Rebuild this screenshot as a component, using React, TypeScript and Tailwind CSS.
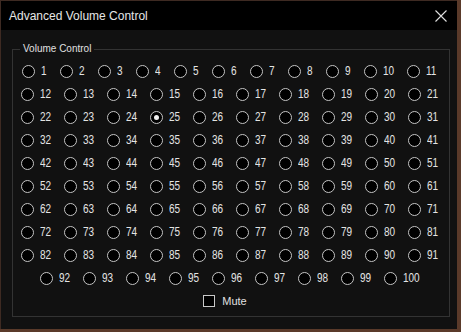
import React from 'react';

const rows: number[][] = [
  Array.from({ length: 11 }, (_, i) => i + 1),
  ...Array.from({ length: 8 }, (_, r) => Array.from({ length: 10 }, (_, i) => 12 + r * 10 + i)),
  Array.from({ length: 9 }, (_, i) => 92 + i),
];

const labelWidth = (n: number) => (n < 10 ? 'w-[6px]' : n < 100 ? 'w-[11px]' : 'w-[17px]');

const Radio: React.FC<{ value: number; checked: boolean }> = ({ value, checked }) => (
  <div className="flex items-center">
    <span className="w-[13px] h-[13px] rounded-full border-[1.5px] border-[#c4c4c4] bg-black flex items-center justify-center shrink-0">
      {checked && <span className="w-[5px] h-[5px] rounded-full bg-[#f2f2f2]" />}
    </span>
    <span className={`ml-[6px] ${labelWidth(value)} text-[12.5px] leading-none text-[#e4e4e4] whitespace-nowrap`}>
      <span className="inline-block origin-left scale-x-[0.8]">{value}</span>
    </span>
  </div>
);

export default function App() {
  const selected = 25;
  return (
    <div className="w-[461px] h-[332px] bg-[#5a3a2a] overflow-hidden" style={{ fontFamily: '"Liberation Sans", Arial, sans-serif' }}>
      <div className="w-[457px] h-[329px] border-l border-t border-[#3e2a22] bg-[#111111] flex flex-col">
        {/* title bar */}
        <div className="h-[29px] bg-black flex items-center justify-between pl-[8px] pr-[8px] shrink-0">
          <span className="text-[12px] text-[#e6e6e6]">Advanced Volume Control</span>
          <svg width="12" height="12" viewBox="0 0 12 12" className="mr-[2px]">
            <path d="M0.5 0.5 L11.5 11.5 M11.5 0.5 L0.5 11.5" stroke="#e0e0e0" strokeWidth="1.1" />
          </svg>
        </div>

        {/* body */}
        <div className="pt-[19px] pl-[11px]">
          <div className="relative w-[438px] h-[268px] border border-[#333333] pt-[10px]">
            <span className="absolute left-[7px] top-[-8px] px-[3px] bg-[#111111] text-[10px] leading-[14px] text-[#e0e0e0]">
              Volume Control
            </span>
            {rows.map((row, i) => (
              <div key={i} className="h-[23px] flex items-center justify-center gap-[13px] pr-[3px]">
                {row.map((n) => (
                  <Radio key={n} value={n} checked={n === selected} />
                ))}
              </div>
            ))}
            <div className="h-[22px] flex items-center justify-center pr-[12px]">
              <span className="w-[12px] h-[12px] border border-[#c8c8c8] bg-black" />
              <span className="ml-[7px] text-[11px] text-[#e0e0e0]">Mute</span>
            </div>
          </div>
        </div>
      </div>
    </div>
  );
}
